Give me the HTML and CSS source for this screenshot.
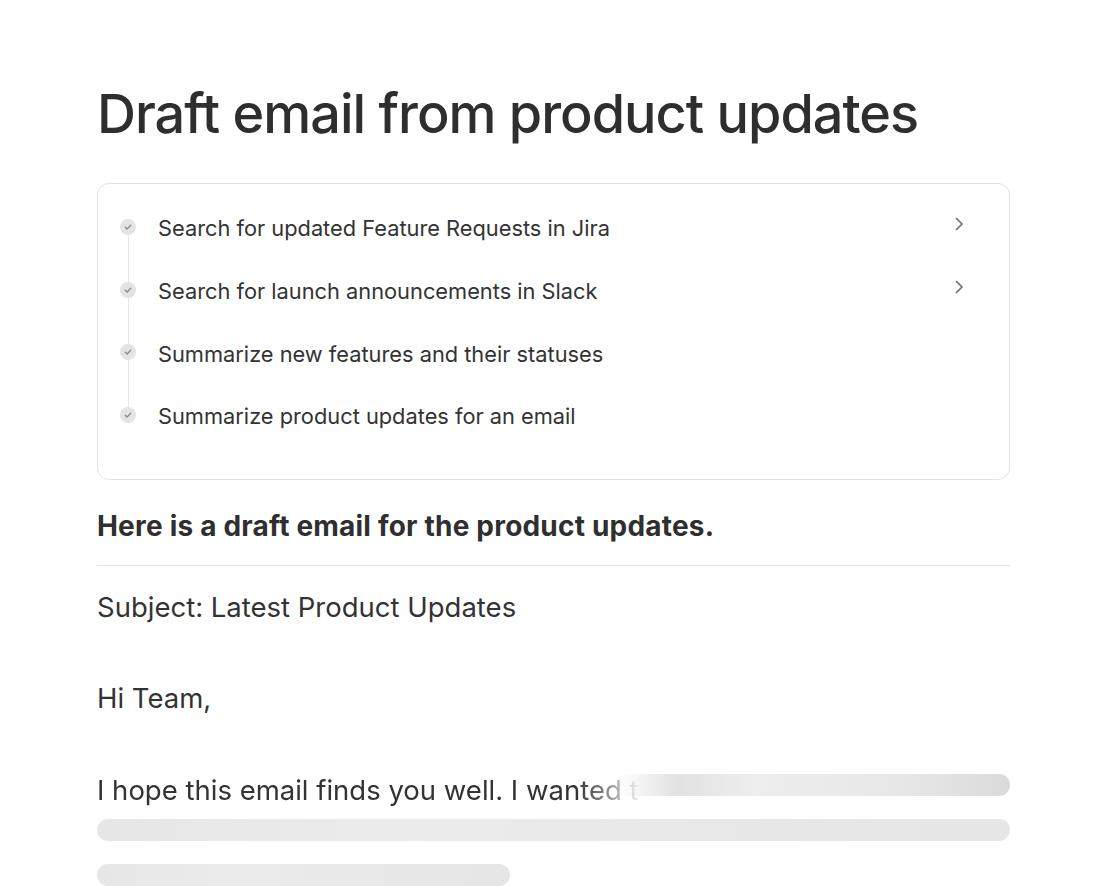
FILE: index.html
```html
<!DOCTYPE html>
<html lang="en">
<head>
<meta charset="utf-8">
<title>Draft email from product updates</title>
<link rel="stylesheet" href="styles.css">
</head>
<body>
<main class="page">
  <h1 class="title">Draft email from product updates</h1>

  <section class="steps">
    <ul class="step-list">
      <li class="step">
        <span class="check"><svg viewBox="0 0 14 14" width="14" height="14"><path d="M4.3 7.2l1.8 1.8 3.6-3.8" fill="none" stroke="#8a8a8a" stroke-width="1.3" stroke-linecap="round" stroke-linejoin="round"/></svg></span>
        <span class="step-text">Search for updated Feature Requests in Jira</span>
        <svg class="chev" viewBox="0 0 14 16" width="14" height="16"><path d="M4.5 2.5l5.5 5.5-5.5 5.5" fill="none" stroke="#6f6f6f" stroke-width="1.7" stroke-linecap="round" stroke-linejoin="round"/></svg>
      </li>
      <li class="step">
        <span class="check"><svg viewBox="0 0 14 14" width="14" height="14"><path d="M4.3 7.2l1.8 1.8 3.6-3.8" fill="none" stroke="#8a8a8a" stroke-width="1.3" stroke-linecap="round" stroke-linejoin="round"/></svg></span>
        <span class="step-text">Search for launch announcements in Slack</span>
        <svg class="chev" viewBox="0 0 14 16" width="14" height="16"><path d="M4.5 2.5l5.5 5.5-5.5 5.5" fill="none" stroke="#6f6f6f" stroke-width="1.7" stroke-linecap="round" stroke-linejoin="round"/></svg>
      </li>
      <li class="step">
        <span class="check"><svg viewBox="0 0 14 14" width="14" height="14"><path d="M4.3 7.2l1.8 1.8 3.6-3.8" fill="none" stroke="#8a8a8a" stroke-width="1.3" stroke-linecap="round" stroke-linejoin="round"/></svg></span>
        <span class="step-text">Summarize new features and their statuses</span>
      </li>
      <li class="step">
        <span class="check"><svg viewBox="0 0 14 14" width="14" height="14"><path d="M4.3 7.2l1.8 1.8 3.6-3.8" fill="none" stroke="#8a8a8a" stroke-width="1.3" stroke-linecap="round" stroke-linejoin="round"/></svg></span>
        <span class="step-text">Summarize product updates for an email</span>
      </li>
    </ul>
  </section>

  <h2 class="lead">Here is a draft email for the product updates.</h2>
  <hr class="rule">

  <div class="email">
    <p class="line">Subject: Latest Product Updates</p>
    <p class="line">Hi Team,</p>
    <div class="line fade-row">
      <span class="fade-text">I hope this email finds you well. I wanted t</span>
      <span class="bar bar-fill"></span>
    </div>
    <div class="bar bar-full"></div>
    <div class="bar bar-short"></div>
  </div>
</main>
</body>
</html>
```

FILE: styles.css
```css
html, body {
  margin: 0;
  padding: 0;
  background: #ffffff;
}

body {
  font-family: "Inter", "Noto Sans", sans-serif;
  color: #333333;
  overflow: hidden;
  height: 886px;
}

.page {
  width: 913px;
  margin-left: 97px;
  padding-top: 82px;
}

.title {
  margin: 0;
  font-size: 54px;
  font-weight: 500;
  letter-spacing: -1px;
  line-height: 64px;
  color: #2e2e2e;
}

.steps {
  margin-top: 37px;
  border: 1px solid #e3e3e3;
  border-radius: 12px;
  padding: 13px 40px 31px 20px;
}

.step-list {
  list-style: none;
  margin: 0;
  padding: 0;
}

.step {
  display: flex;
  align-items: center;
  height: 62.7px;
  position: relative;
}

.step::before {
  content: "";
  position: absolute;
  left: 10px;
  top: 30px;
  height: 63px;
  width: 1px;
  background: #e6e6e6;
}

.step:last-child::before {
  display: none;
}

.check {
  width: 16px;
  height: 16px;
  border-radius: 50%;
  background: #e4e4e4;
  display: flex;
  align-items: center;
  justify-content: center;
  flex: none;
  margin-left: 2px;
  margin-bottom: 3px;
  position: relative;
  z-index: 1;
}

.check svg {
  display: block;
}

.step-text {
  margin-left: 22px;
  font-size: 21.8px;
  color: #333333;
  flex: 1;
}

.chev {
  flex: none;
  margin-right: 3px;
  margin-bottom: 8px;
}

.lead {
  margin: 27px 0 0;
  font-size: 28px;
  font-weight: 700;
  letter-spacing: 0.2px;
  line-height: 38px;
  color: #2f2f2f;
}

.rule {
  margin: 20px 0 0;
  border: 0;
  height: 1px;
  background: #e3e3e3;
}

.email {
  padding-top: 18px;
}

.line {
  margin: 0 0 45.5px;
  font-size: 27.5px;
  line-height: 46px;
  color: #333333;
}

.fade-row {
  display: flex;
  align-items: center;
  margin-bottom: 0;
  position: relative;
}

.fade-text {
  white-space: nowrap;
  -webkit-mask-image: linear-gradient(to right, #000 0, #000 480px, transparent 548px);
  mask-image: linear-gradient(to right, #000 0, #000 480px, transparent 548px);
}

.bar {
  height: 22px;
  border-radius: 11px;
  background: linear-gradient(90deg, #e6e6e6 0%, #ececec 35%, #e8e8e8 60%, #e6e6e6 100%);
}

.bar-fill {
  position: absolute;
  left: 520px;
  right: 0;
  top: 50%;
  margin-top: -16px;
  background: linear-gradient(90deg, rgba(255,255,255,0) 0px, #e2e2e2 60px, #eeeeee 140px, #e6e6e6 300px, #dadada 100%);
}

.bar-full {
  margin-top: 6px;
}

.bar-short {
  margin-top: 23px;
  width: 413px;
}
```
